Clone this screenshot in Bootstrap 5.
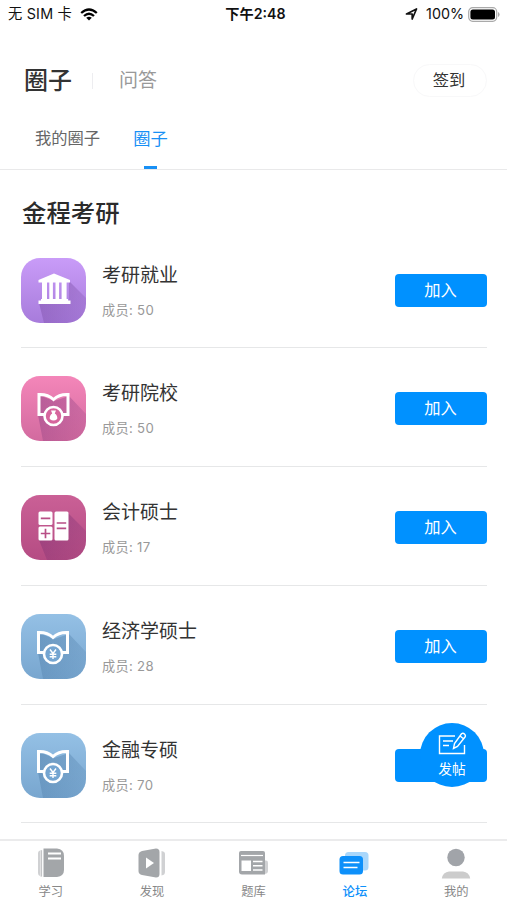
<!DOCTYPE html>
<html lang="zh-CN">
<head>
<meta charset="utf-8">
<meta name="viewport" content="width=device-width, initial-scale=1">
<title>圈子</title>
<link rel="stylesheet" href="https://cdn.jsdelivr.net/npm/bootstrap@5.3.0/dist/css/bootstrap.min.css">
<style>
body{font-family:Inter,"Noto Sans CJK SC",sans-serif;color:#333;background:#fff;height:900px;overflow:hidden}
svg{display:block;flex:none}
.status{height:28px;padding:0 7px 0 8px;color:#111;font-size:14.3px;line-height:28px}
.status>div{flex:1 1 0}
.status .sim{letter-spacing:.2px}
.status .clock{flex:none;font-weight:600;font-size:14.2px;padding-left:3px}
.top-bar{height:84px;padding:22px 20px 0 24px}
.top-title{font-size:24px;font-weight:500;line-height:36px}
.top-sep{width:1px;height:16px;background:#ededf0;margin:0 26px 0 20px}
.top-alt{font-size:19px;color:#999;line-height:36px}
.sign{width:74px;height:33px;border:1px solid #f8f8f9;border-radius:17px;font-size:16.3px;color:#333;padding:0 2px 0 0;line-height:31px;margin-top:-2px}
.tabs{height:58px;border-bottom:1px solid #e9e9ea;padding-left:35px;gap:33px}
.tabs a{color:#666;font-size:16.3px;line-height:53px;text-decoration:none;height:57px}
.tabs a.on{color:#1890f5;font-size:17.3px;position:relative}
.tabs a.on::after{content:"";position:absolute;left:11px;bottom:0;width:13px;height:3px;background:#1890f5}
.section-title{font-size:24.4px;font-weight:500;line-height:36px;margin:0;padding:25px 0 0 22px;height:59.5px;color:#2b2b2b}
.rows{margin:0 20px 0 21px}
.group-row{height:118.75px;border-bottom:1px solid #e6e7e8;padding-top:28px}
.group-name{font-size:19px;line-height:28px;margin:4px 0 0;font-weight:400;color:#333}
.group-count{font-size:13.2px;line-height:20px;margin-top:10px;color:#999;letter-spacing:.3px}
.join{width:92px;height:33px;margin-top:16px;background:#0091ff;color:#fff;border:0;border-radius:4px;font-size:16.3px;line-height:33px;padding:0 1px 0 0}
.join:hover{background:#0084ea;color:#fff}
.post{position:absolute;left:420px;top:723px;width:64px;height:64px;border:0;border-radius:50%;background:#0091ff;color:#fff;font-size:13.7px;line-height:18px;padding:9px 0 0}
.post span{margin-top:4px}
.bottom-nav{position:absolute;left:0;right:0;top:839px;height:61px;background:#fff;border-top:2px solid #ebebec}
.bottom-nav a{flex:1 1 0;color:#888;font-size:12.3px;line-height:18px;text-decoration:none;padding-top:6px}
.bottom-nav a.on{color:#0f91fb;font-weight:500}
.bottom-nav svg{margin-bottom:4px}
</style>
</head>
<body>
<svg width="0" height="0" class="position-absolute" aria-hidden="true">
  <defs>
    <linearGradient id="violet" x2="0" y2="1"><stop stop-color="#c99cf8"/><stop offset="1" stop-color="#a77bdb"/></linearGradient>
    <linearGradient id="pink" x2="0" y2="1"><stop stop-color="#f486b9"/><stop offset="1" stop-color="#d26a9f"/></linearGradient>
    <linearGradient id="wine" x2="0" y2="1"><stop stop-color="#ca6096"/><stop offset="1" stop-color="#b54c83"/></linearGradient>
    <linearGradient id="blue" x2="0" y2="1"><stop stop-color="#94c0e5"/><stop offset="1" stop-color="#78a6cf"/></linearGradient>
    <linearGradient id="shade" x2="1" y2="1"><stop stop-color="#401060" stop-opacity=".3"/><stop offset="1" stop-color="#401060" stop-opacity=".04"/></linearGradient>
    <linearGradient id="shadeBlue" x2="1" y2="1"><stop stop-color="#104070" stop-opacity=".26"/><stop offset="1" stop-color="#104070" stop-opacity=".03"/></linearGradient>
    <clipPath id="tile"><rect width="65" height="65" rx="19"/></clipPath>
    <g id="book"><path d="M25 38.500H18V18.500Q26.500 18 32.500 23.500Q38.500 18 47 18.500V38.500H40" fill="none" stroke="#fff" stroke-width="3"/></g>
  </defs>
</svg>

<header class="status d-flex justify-content-between">
  <div class="d-flex align-items-center gap-2"><span class="sim">无 SIM 卡</span>
    <svg width="18" height="13" viewBox="0 0 18 13" fill="none" stroke="#000" stroke-width="2.3"><path d="M1.2 5Q9-2 16.8 5M4 8Q9 3.5 14 8"/><path d="M6.2 9.7Q9 7.6 11.8 9.7L9 12.5Z" fill="#000" stroke="none"/></svg>
  </div>
  <span class="clock">下午2:48</span>
  <div class="d-flex align-items-center justify-content-end">
    <svg width="13" height="12" viewBox="0 0 13 12" class="me-2"><path d="M1.500 6L11.500 1L7.200 11V6Z" fill="none" stroke="#111" stroke-width="1.700" stroke-linejoin="round"/></svg>
    <span>100%</span>
    <svg width="32" height="15" viewBox="0 0 32 15" class="ms-1"><rect x=".7" y=".7" width="28" height="13.6" rx="4" fill="#fff" stroke="#aaa" stroke-width="1.2"/><rect x="2.4" y="2.4" width="24.6" height="10.2" rx="2.5" fill="#000"/><path d="M30 5v5q1.6-.8 1.6-2.5T30 5" fill="#aaa"/></svg>
  </div>
</header>

<div class="top-bar d-flex align-items-center">
  <span class="top-title">圈子</span><span class="top-sep"></span><span class="top-alt">问答</span>
  <button class="btn sign ms-auto">签到</button>
</div>

<nav class="tabs d-flex"><a href="#">我的圈子</a><a href="#" class="on">圈子</a></nav>

<main>
  <h1 class="section-title">金程考研</h1>
  <div class="rows">
    <div class="group-row d-flex align-items-start">
      <svg width="65" height="65" viewBox="0 0 65 65"><g clip-path="url(#tile)"><path fill="url(#violet)" d="M0 0h65v65H0z"/><path fill="url(#shade)" d="M48 23L65 40V65H23L18 45H48Z"/></g><path fill="#fff" d="M33 15.500L49 22V24.500H17.500V22ZM21 24.500h5V41h-5zM28.300 24.500h3.600V41h-3.600zM34.500 24.500h3.600V41h-3.600zM40.600 24.500h5V41h-5zM20 41h27v1.600h2.500V46h-32v-3.400H20z"/></svg>
      <div class="ms-3"><h2 class="group-name">考研就业</h2><div class="group-count">成员: 50</div></div>
      <button class="btn join ms-auto">加入</button>
    </div>
    <div class="group-row d-flex align-items-start">
      <svg width="65" height="65" viewBox="0 0 65 65"><g clip-path="url(#tile)"><path fill="url(#pink)" d="M0 0h65v65H0z"/><path fill="url(#shade)" d="M18 19L33 25L48 20L65 38V65H22L17 39Z"/></g><use href="#book"/><circle cx="32.500" cy="40" r="9" fill="#d6659d" stroke="#fff" stroke-width="2.600"/><path d="M30 34.500h5l-1.200 3q3 2 2.400 5.500-3.700 3-7.400 0-.6-3.500 2.400-5.500z" fill="#fff"/></svg>
      <div class="ms-3"><h2 class="group-name">考研院校</h2><div class="group-count">成员: 50</div></div>
      <button class="btn join ms-auto">加入</button>
    </div>
    <div class="group-row d-flex align-items-start">
      <svg width="65" height="65" viewBox="0 0 65 65"><g clip-path="url(#tile)"><path fill="url(#wine)" d="M0 0h65v65H0z"/><path fill="url(#shade)" d="M47 18L65 36V65H26L18 45H47Z"/></g><g fill="#fff"><rect x="17.500" y="16.500" width="14" height="13.500" rx="1.500"/><rect x="17.500" y="31.500" width="14" height="14" rx="1.500"/><rect x="33.500" y="16.500" width="14" height="29" rx="1.500"/></g><path d="M19.800 23.300h9.500M19.800 38.500h9.500M24.500 33.700v9.500M35.700 28h9.500M35.700 33.300h9.500" stroke="#b84e86" stroke-width="1.700"/></svg>
      <div class="ms-3"><h2 class="group-name">会计硕士</h2><div class="group-count">成员: 17</div></div>
      <button class="btn join ms-auto">加入</button>
    </div>
    <div class="group-row d-flex align-items-start">
      <svg width="65" height="65" viewBox="0 0 65 65"><g clip-path="url(#tile)"><path fill="url(#blue)" d="M0 0h65v65H0z"/><path fill="url(#shadeBlue)" d="M18 19L33 25L48 20L65 38V65H22L17 39Z"/></g><use href="#book" x="-.5"/><circle cx="32" cy="40" r="9" fill="#74a5d1" stroke="#fff" stroke-width="2.600"/><path d="M29 35.500l3 4 3-4M32 39.500V45M28.700 40.200h6.600M28.700 42.700h6.600" fill="none" stroke="#fff" stroke-width="1.400"/></svg>
      <div class="ms-3"><h2 class="group-name">经济学硕士</h2><div class="group-count">成员: 28</div></div>
      <button class="btn join ms-auto">加入</button>
    </div>
    <div class="group-row d-flex align-items-start">
      <svg width="65" height="65" viewBox="0 0 65 65"><g clip-path="url(#tile)"><path fill="url(#blue)" d="M0 0h65v65H0z"/><path fill="url(#shadeBlue)" d="M18 19L33 25L48 20L65 38V65H22L17 39Z"/></g><use href="#book" x="-.5"/><circle cx="32" cy="40" r="9" fill="#74a5d1" stroke="#fff" stroke-width="2.600"/><path d="M29 35.500l3 4 3-4M32 39.500V45M28.700 40.200h6.600M28.700 42.700h6.600" fill="none" stroke="#fff" stroke-width="1.400"/></svg>
      <div class="ms-3"><h2 class="group-name">金融专硕</h2><div class="group-count">成员: 70</div></div>
      <button class="btn join ms-auto" aria-label="加入"></button>
    </div>
  </div>
</main>

<button class="post d-flex flex-column align-items-center">
  <svg width="30" height="24" viewBox="0 0 30 24" fill="none" stroke="#fff" stroke-width="1.400"><path d="M18 4H2.500V21.500H27.500V13M6 9h10M6 13.500h6"/><path d="M16.500 16.500L17.500 11.500L24.500 1.800Q26 .5 27.500 2T28 5L20.500 14.500ZM23 4L26.500 6.800"/></svg>
  <span>发帖</span>
</button>

<nav class="bottom-nav d-flex">
  <a href="#" class="d-flex flex-column align-items-center"><svg width="30" height="32" viewBox="0 0 30 32"><path d="M4 3.500Q2 4 2 6V26Q2 28.500 4 29Z" fill="#d0d1d3"/><path d="M4.500 3.200h1.600v26.400H4.500z" fill="#c4c5c7"/><path d="M7.500 1.500H21Q28 2 28 9V23Q28 29 21 30H7.500Z" fill="#a3a6a9"/><path d="M12 6.500h13M12 11.500h13" stroke="#fff" stroke-width="2"/></svg>学习</a>
  <a href="#" class="d-flex flex-column align-items-center"><svg width="30" height="32" viewBox="0 0 30 32"><path d="M5 4L19 1.500Q22.500 1.500 22.500 5V27Q22.500 30.500 19 30.500L5 28Q1.500 27 1.500 24V8Q1.500 5 5 4Z" fill="#a3a6a9"/><path d="M9 10.500L17 16L9 21.500Z" fill="#fff"/><path d="M23.600 4v24.500" stroke="#fff" stroke-width="1.200"/><path d="M24.500 4q3.500 .5 3.500 3V25q0 3-3.500 3.500Z" fill="#d0d1d3"/></svg>发现</a>
  <a href="#" class="d-flex flex-column align-items-center"><svg width="32" height="32" viewBox="0 0 32 32"><path d="M26 13.500h2q2 0 2 2V24q0 3-4 3Z" fill="#d0d1d3"/><path d="M1 6q0-2 2-2H25q2 0 2 2V27.500H4q-3 0-3-3Z" fill="#a3a6a9"/><path d="M3 8.500H25" stroke="#fff" stroke-width="1.200"/><path d="M3.500 13.500h9.500V24h-9.500z" fill="#fff"/><path d="M15 14.500h9.500M15 18.700h9.500M15 23h9.500" stroke="#fff" stroke-width="1.500"/></svg>题库</a>
  <a href="#" class="on d-flex flex-column align-items-center"><svg width="32" height="32" viewBox="0 0 32 32"><rect x="6" y="5" width="23.500" height="18.500" rx="3.500" fill="#a9d7fb"/><rect x=".5" y="9" width="23.500" height="18.500" rx="3.500" fill="#0d90fa"/><path d="M4.500 15.500h16M4.500 20.500h14" stroke="#fff" stroke-width="1.700"/></svg>论坛</a>
  <a href="#" class="d-flex flex-column align-items-center"><svg width="30" height="32" viewBox="0 0 30 32"><circle cx="15" cy="10.500" r="8.700" fill="#a1a4a9"/><path d="M.800 31.500Q2 25 8 24.500H22Q28 25 29.200 31.500Z" fill="#ccc"/></svg>我的</a>
</nav>
<script src="https://cdn.jsdelivr.net/npm/bootstrap@5.3.0/dist/js/bootstrap.bundle.min.js"></script>
</body>
</html>
